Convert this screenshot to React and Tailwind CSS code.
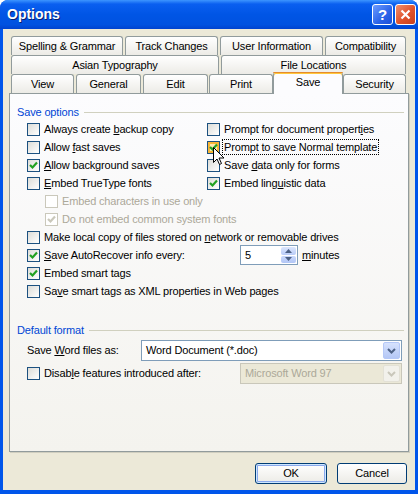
import React from "react";

const Check = ({ disabled }) => (
  <svg width="11" height="11" viewBox="0 0 11 11" className="absolute left-0 top-0">
    <polyline
      points="2,5 4.5,7.5 9,2.5"
      fill="none"
      stroke={disabled ? "#CAC8BB" : "#21A121"}
      strokeWidth="2.2"
    />
  </svg>
);

const Box = ({ checked, disabled, hover }) => (
  <span
    className={`relative block h-[13px] w-[13px] shrink-0 border ${
      disabled ? "border-[#CAC8BB] bg-white" : "border-[#1C5180] bg-[linear-gradient(135deg,#DCDCD7,#FFFFFF)]"
    }`}
  >
    {hover && <span className="absolute inset-0 border-2 border-[#F8B636] bg-[#FEE9B0]" />}
    {checked && <Check disabled={disabled} />}
  </span>
);

const Row = ({ checked, disabled, hover, focus, children, className = "" }) => (
  <div className={`flex h-[18px] items-center gap-[4px] ${className}`}>
    <Box checked={checked} disabled={disabled} hover={hover} />
    <span
      className={`whitespace-nowrap leading-[14px] ${disabled ? "text-[#ACA899]" : "text-black"} ${
        focus ? "-ml-[1px] px-[1px] outline outline-1 outline-dotted outline-black" : ""
      }`}
    >
      {children}
    </span>
  </div>
);

const U = ({ children }) => <span className="underline underline-offset-[1px]">{children}</span>;

const Tab = ({ w, children, className = "" }) => (
  <div
    className={`flex h-[19px] items-center justify-center rounded-t-[3px] border-x border-t border-[#919B9C] bg-[linear-gradient(to_bottom,#FFFFFF,#ECEBE6)] ${w} ${className}`}
  >
    {children}
  </div>
);

const Heading = ({ children, className = "" }) => (
  <div className={`ml-[7px] mr-[4px] flex h-[16px] items-center ${className}`}>
    <span className="text-[#0046D5] whitespace-nowrap">{children}</span>
    <div className="ml-[5px] h-px flex-1 bg-[#D0D0BF]" />
  </div>
);

const Chevron = ({ color }) => (
  <svg width="9" height="6" viewBox="0 0 9 6">
    <polyline points="1,1 4.5,4.5 8,1" fill="none" stroke={color} strokeWidth="2" />
  </svg>
);

export default function App() {
  return (
    <div className="relative flex h-[494px] w-[418px] flex-col overflow-hidden rounded-t-[8px] bg-[#0055EA] font-['Liberation_Sans',Arial,sans-serif] text-[11px] tracking-[-0.15px] text-black">
      {/* title bar */}
      <div className="flex h-[29px] shrink-0 items-center bg-[linear-gradient(to_bottom,#3D95FF_0%,#0A5FF0_14%,#0055E5_50%,#0052E0_85%,#0043CF_100%)] pl-[7px] pr-[2px]">
        <span className="flex-1 text-[14px] font-bold tracking-normal text-white [text-shadow:1px_1px_0_#0A1F6E]">Options</span>
        <div className="flex gap-[2px]">
          <div className="flex h-[21px] w-[21px] items-center justify-center rounded-[3px] border border-white bg-[linear-gradient(135deg,#6D9CFF,#2A63E8_60%,#1C4FD8)] text-[15px] font-bold leading-none text-white">
            ?
          </div>
          <div className="flex h-[21px] w-[21px] items-center justify-center rounded-[3px] border border-white bg-[linear-gradient(135deg,#F0906E,#E0522B_55%,#C8401C)]">
            <svg width="11" height="11" viewBox="0 0 11 11">
              <path d="M1.5 1.5 L9.5 9.5 M9.5 1.5 L1.5 9.5" stroke="white" strokeWidth="2.2" />
            </svg>
          </div>
        </div>
      </div>

      {/* body */}
      <div className="mx-[3px] mb-[4px] flex flex-1 flex-col bg-[#ECE9D8] px-[6px] pt-[7px]">
        {/* tabs */}
        <div className="flex flex-col px-[2px]">
          <div className="flex gap-[2px]">
            <Tab w="w-[112px]">Spelling &amp; Grammar</Tab>
            <Tab w="w-[93px]">Track Changes</Tab>
            <Tab w="w-[103px]">User Information</Tab>
            <Tab w="w-[81px]">Compatibility</Tab>
          </div>
          <div className="flex gap-[2px]">
            <Tab w="w-[208px]">Asian Typography</Tab>
            <Tab w="w-[185px]">File Locations</Tab>
          </div>
          <div className="flex">
            <Tab w="w-[63px]">View</Tab>
            <Tab w="w-[65px]" className="ml-[2px]">General</Tab>
            <Tab w="w-[65px]" className="ml-[2px]">Edit</Tab>
            <Tab w="w-[64px]" className="ml-[1px]">Print</Tab>
            <div className="relative z-10 -mb-[1px] -mt-[2px] flex h-[22px] w-[70px] items-center justify-center rounded-t-[3px] border-x border-[#919B9C] bg-[#FCFCFE] pb-[2px] shadow-[inset_0_2px_0_#FFC83C] before:absolute before:-left-px before:-right-px before:top-0 before:h-px before:rounded-t-[3px] before:bg-[#E68B2C]">
              Save
            </div>
            <Tab w="w-[63px]">Security</Tab>
          </div>
        </div>

        {/* panel */}
        <div className="flex h-[359px] flex-col border border-[#919B9C] bg-[linear-gradient(to_bottom,#FCFCFE,#F4F3EE)] pt-[10px] shadow-[1px_1px_0_#D0CEBF]">
          <Heading>Save options</Heading>
          <div className="ml-[17px] flex flex-col">
            <div className="grid grid-cols-[180px_1fr]">
              <div className="flex flex-col">
                <Row>Always create <U>b</U>ackup copy</Row>
                <Row>Allow <U>f</U>ast saves</Row>
                <Row checked><U>A</U>llow background saves</Row>
                <Row><U>E</U>mbed TrueType fonts</Row>
              </div>
              <div className="flex flex-col">
                <Row>Prompt for document propert<U>i</U>es</Row>
                <Row checked hover focus>Prompt to save Normal template</Row>
                <Row>Save <U>d</U>ata only for forms</Row>
                <Row checked>Embed ling<U>u</U>istic data</Row>
              </div>
            </div>
            <Row disabled className="ml-[18px]">Embed characters in use only</Row>
            <Row disabled checked className="ml-[18px]">Do not embed common system fonts</Row>
            <Row>Make local copy of files stored on <U>n</U>etwork or removable drives</Row>
            <div className="flex h-[18px] items-center">
              <Box checked />
              <span className="ml-[4px] w-[196px] whitespace-nowrap"><U>S</U>ave AutoRecover info every:</span>
              <div className="flex h-[20px] w-[58px] items-center border border-[#7F9DB9] bg-white p-[1px]">
                <span className="flex-1 pl-[3px]">5</span>
                <div className="flex h-full w-[15px] flex-col gap-px">
                  <div className="flex flex-1 items-center justify-center rounded-[2px] bg-[linear-gradient(to_bottom,#DCE6FD,#B9CCF8)]">
                    <svg width="7" height="4" viewBox="0 0 7 4"><polygon points="0,4 3.5,0 7,4" fill="#4D6185" /></svg>
                  </div>
                  <div className="flex flex-1 items-center justify-center rounded-[2px] bg-[linear-gradient(to_bottom,#C9D8FB,#B2C6F6)]">
                    <svg width="7" height="4" viewBox="0 0 7 4"><polygon points="0,0 3.5,4 7,0" fill="#4D6185" /></svg>
                  </div>
                </div>
              </div>
              <span className="ml-[4px]"><U>m</U>inutes</span>
            </div>
            <Row checked>Embed smart ta<U>g</U>s</Row>
            <Row>Sa<U>v</U>e smart tags as XML properties in Web pages</Row>
          </div>

          <Heading className="mt-[22px]">Default format</Heading>
          <div className="ml-[17px] mr-[6px] flex flex-col">
            <div className="mt-[2px] flex h-[21px] items-center">
              <span className="w-[114px] whitespace-nowrap">Save <U>W</U>ord files as:</span>
              <div className="flex h-full flex-1 items-center border border-[#7F9DB9] bg-white p-[1px]">
                <span className="flex-1 pl-[3px]">Word Document (*.doc)</span>
                <div className="flex h-full w-[17px] items-center justify-center rounded-[2px] border border-[#B5C8F7] bg-[linear-gradient(to_bottom,#D6E2FD,#B4C7F6)]">
                  <Chevron color="#4D6185" />
                </div>
              </div>
            </div>
            <div className="mt-[2px] flex h-[21px] items-center">
              <Box />
              <span className="ml-[4px] w-[196px] whitespace-nowrap">Disab<U>l</U>e features introduced after:</span>
              <div className="flex h-full flex-1 items-center border border-[#C9C7BA] bg-[#EBE8D7] p-[1px]">
                <span className="flex-1 pl-[3px] text-[#ACA899]">Microsoft Word 97</span>
                <div className="flex h-full w-[17px] items-center justify-center rounded-[2px] border border-[#E3E1D6] bg-[#F2F1EB]">
                  <Chevron color="#C9C7BA" />
                </div>
              </div>
            </div>
          </div>
        </div>

        {/* buttons */}
        <div className="flex flex-1 items-start justify-end gap-[10px] pr-[2px] pt-[11px]">
          <button className="h-[21px] w-[72px] rounded-[3px] border border-[#003C74] bg-[linear-gradient(to_bottom,#FFFFFF,#ECEBE6)] shadow-[inset_0_0_0_1px_#CEE7FF,inset_0_0_0_2px_#8AA9EC]">
            OK
          </button>
          <button className="h-[21px] w-[70px] rounded-[3px] border border-[#003C74] bg-[linear-gradient(to_bottom,#FFFFFF,#ECEBE6)]">
            Cancel
          </button>
        </div>
      </div>

      {/* mouse cursor */}
      <svg width="12" height="19" viewBox="0 0 12 19" className="absolute left-[213px] top-[147px] z-20">
        <path d="M0.5 0.5 L0.5 15.5 L4 12 L6.5 17.5 L8.5 16.5 L6 11 L11 11 Z" fill="white" stroke="black" strokeWidth="1" />
      </svg>
    </div>
  );
}
